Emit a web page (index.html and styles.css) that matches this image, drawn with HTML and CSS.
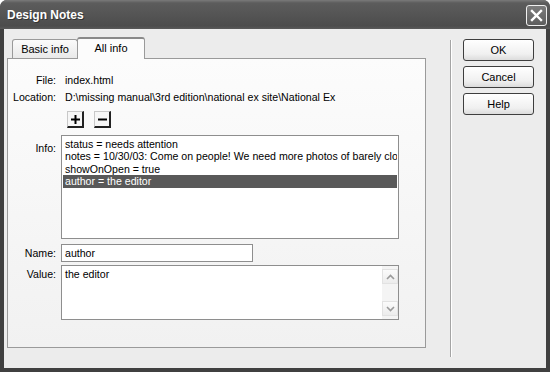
FILE: index.html
```html
<!DOCTYPE html>
<html lang="en">
<head>
    <meta charset="UTF-8">
    <title>Design Notes</title>
    <link rel="stylesheet" href="styles.css">
</head>
<body>

    <div class="window">
        <div class="titlebar">
            <span class="title">Design Notes</span>
            <div class="close">
                <svg width="13" height="13" viewBox="0 0 13 13">
                    <path d="M2 2 L11 11 M11 2 L2 11" stroke="#fff" stroke-width="2.4" stroke-linecap="square"/>
                </svg>
            </div>
        </div>

        <div class="client">
            <div class="main">
                <div class="tabs">
                    <div class="tab">Basic info</div>
                    <div class="tab active">All info</div>
                </div>

                <div class="panel">
                    <div class="label">File:</div>
                    <div class="value">index.html</div>

                    <div class="label">Location:</div>
                    <div class="value">D:\missing manual\3rd edition\national ex site\National Ex</div>

                    <div></div>
                    <div class="tools">
                        <div class="tool">
                            <svg width="9" height="9" viewBox="0 0 9 9"><path d="M0 3.5h9v2H0z M3.5 0h2v9h-2z" fill="#000"/></svg>
                        </div>
                        <div class="tool">
                            <svg width="9" height="9" viewBox="0 0 9 9"><path d="M0 3.5h9v2H0z" fill="#000"/></svg>
                        </div>
                    </div>

                    <div class="label label-info">Info:</div>
                    <div class="list">
                        <div class="item">status = needs attention</div>
                        <div class="item">notes = 10/30/03: Come on people! We need more photos of barely clothed models</div>
                        <div class="item">showOnOpen = true</div>
                        <div class="item selected">author = the editor</div>
                    </div>

                    <div class="label label-name">Name:</div>
                    <div class="field">author</div>

                    <div class="label label-value">Value:</div>
                    <div class="textarea">
                        <div class="text">the editor</div>
                        <div class="scroll">
                            <div class="arrow">
                                <svg width="9" height="6" viewBox="0 0 9 6"><path d="M1 5 L4.5 1.5 L8 5" fill="none" stroke="#9a9a9a" stroke-width="1.6"/></svg>
                            </div>
                            <div class="track"></div>
                            <div class="arrow">
                                <svg width="9" height="6" viewBox="0 0 9 6"><path d="M1 1 L4.5 4.5 L8 1" fill="none" stroke="#9a9a9a" stroke-width="1.6"/></svg>
                            </div>
                        </div>
                    </div>
                </div>
            </div>

            <div class="separator"></div>

            <div class="buttons">
                <div class="button">OK</div>
                <div class="button">Cancel</div>
                <div class="button">Help</div>
            </div>
        </div>
    </div>

</body>
</html>
```

FILE: styles.css
```css
html, body {
    margin: 0;
    padding: 0;
    background: #ffffff;
}
body {
    font-family: "Liberation Sans", Arial, sans-serif;
    font-size: 10.6px;
    color: #111;
}
.window {
    width: 550px;
    height: 372px;
    display: flex;
    flex-direction: column;
    background: #404040;
    border-radius: 7px 7px 0 0;
    overflow: hidden;
}
.titlebar {
    height: 29px;
    flex: none;
    display: flex;
    align-items: center;
    padding: 0 3px 0 7px;
    background: linear-gradient(#7a7a7a 0, #5c5c5c 3px, #555555 14px, #4c4c4c 26px, #5a5a5a 29px);
}
.title {
    flex: 1;
    color: #ffffff;
    font-weight: bold;
    font-size: 12px;
    text-shadow: 1px 1px 0 #333;
    margin-top: 1px;
}
.close {
    width: 19px;
    height: 19px;
    border: 1px solid #f0f0f0;
    border-radius: 3px;
    background: linear-gradient(#7c7c7c, #5e5e5e);
    display: flex;
    align-items: center;
    justify-content: center;
    margin-top: 2px;
}
.client {
    flex: 1;
    display: flex;
    margin: 0 4px 4px 4px;
    background: #ececec;
}
.main {
    padding: 8px 0 0 3px;
}
.tabs {
    height: 21px;
    display: flex;
    align-items: flex-end;
    padding-left: 5px;
}
.tab {
    height: 18px;
    width: 64px;
    border: 1px solid #9a9a9a;
    border-bottom: none;
    border-radius: 3px 3px 0 0;
    background: linear-gradient(#fbfbfb, #e9e9e9);
    text-align: center;
    line-height: 19px;
    font-size: 11px;
    color: #000;
}
.tab.active {
    width: 66px;
    height: 20px;
    margin-bottom: -1px;
    margin-left: -1px;
    position: relative;
    z-index: 1;
    border-top: 2px solid #8a8a8a;
    background: #fcfcfc;
    line-height: 19px;
}
.panel {
    width: 417px;
    height: 275px;
    border: 1px solid #9a9a9a;
    background: linear-gradient(#fcfcfc, #f1f1f1);
    padding: 13px 0 0 0;
    display: grid;
    grid-template-columns: 48px 338px;
    grid-template-rows: 17px 17px auto auto auto auto;
    column-gap: 5px;
    align-content: start;
    align-items: start;
}
.label {
    text-align: right;
    line-height: 17px;
    color: #000;
}
.value {
    padding-left: 4px;
    line-height: 17px;
    white-space: nowrap;
    color: #000;
}
.tools {
    display: flex;
    gap: 10px;
    padding: 5px 0 0 6px;
}
.tool {
    width: 14px;
    height: 14px;
    background: #f6f6f6;
    border: 1px solid #c8c8c8;
    border-right: 2px solid #222;
    border-bottom: 2px solid #222;
    display: flex;
    align-items: center;
    justify-content: center;
}
.list {
    margin-top: 7px;
    height: 104px;
    box-sizing: border-box;
    border: 1px solid #8e8e8e;
    background: #ffffff;
    padding-top: 2px;
    overflow: hidden;
}
.label-info {
    margin-top: 7px;
    padding-top: 5px;
}
.item {
    margin: 0 1px;
    padding-left: 2px;
    line-height: 12.4px;
    height: 12.4px;
    white-space: nowrap;
    overflow: hidden;
    color: #000;
}
.item.selected {
    background: #595959;
    color: #ffffff;
}
.label-name {
    margin-top: 5px;
    line-height: 18px;
}
.field {
    margin-top: 5px;
    width: 187px;
    height: 16px;
    border: 1px solid #8e8e8e;
    background: #ffffff;
    padding-left: 3px;
    line-height: 16px;
    color: #000;
}
.label-value {
    margin-top: 3px;
    padding-top: 1px;
}
.textarea {
    margin-top: 3px;
    height: 53px;
    border: 1px solid #8e8e8e;
    background: #ffffff;
    display: flex;
}
.text {
    flex: 1;
    padding: 2px 0 0 3px;
    line-height: 13px;
    color: #000;
}
.scroll {
    width: 16px;
    display: flex;
    flex-direction: column;
    background: #f4f4f4;
    padding: 3px 0;
}
.arrow {
    height: 13px;
    border: 1px solid #e2e2e2;
    background: linear-gradient(#fbfbfb, #ececec);
    display: flex;
    align-items: center;
    justify-content: center;
}
.track {
    flex: 1;
}
.separator {
    width: 1px;
    margin: 11px 0 11px 24px;
    border-left: 1px solid #a4a4a4;
    background: #ffffff;
}
.buttons {
    margin: 10px 0 0 11px;
    display: flex;
    flex-direction: column;
    gap: 5px;
}
.button {
    width: 69px;
    height: 20px;
    border: 1px solid #3e3e3e;
    border-radius: 3px;
    background: linear-gradient(#ffffff, #f0f0f0 70%, #dcdcdc);
    text-align: center;
    line-height: 20px;
    font-size: 11px;
    color: #000;
}
```
